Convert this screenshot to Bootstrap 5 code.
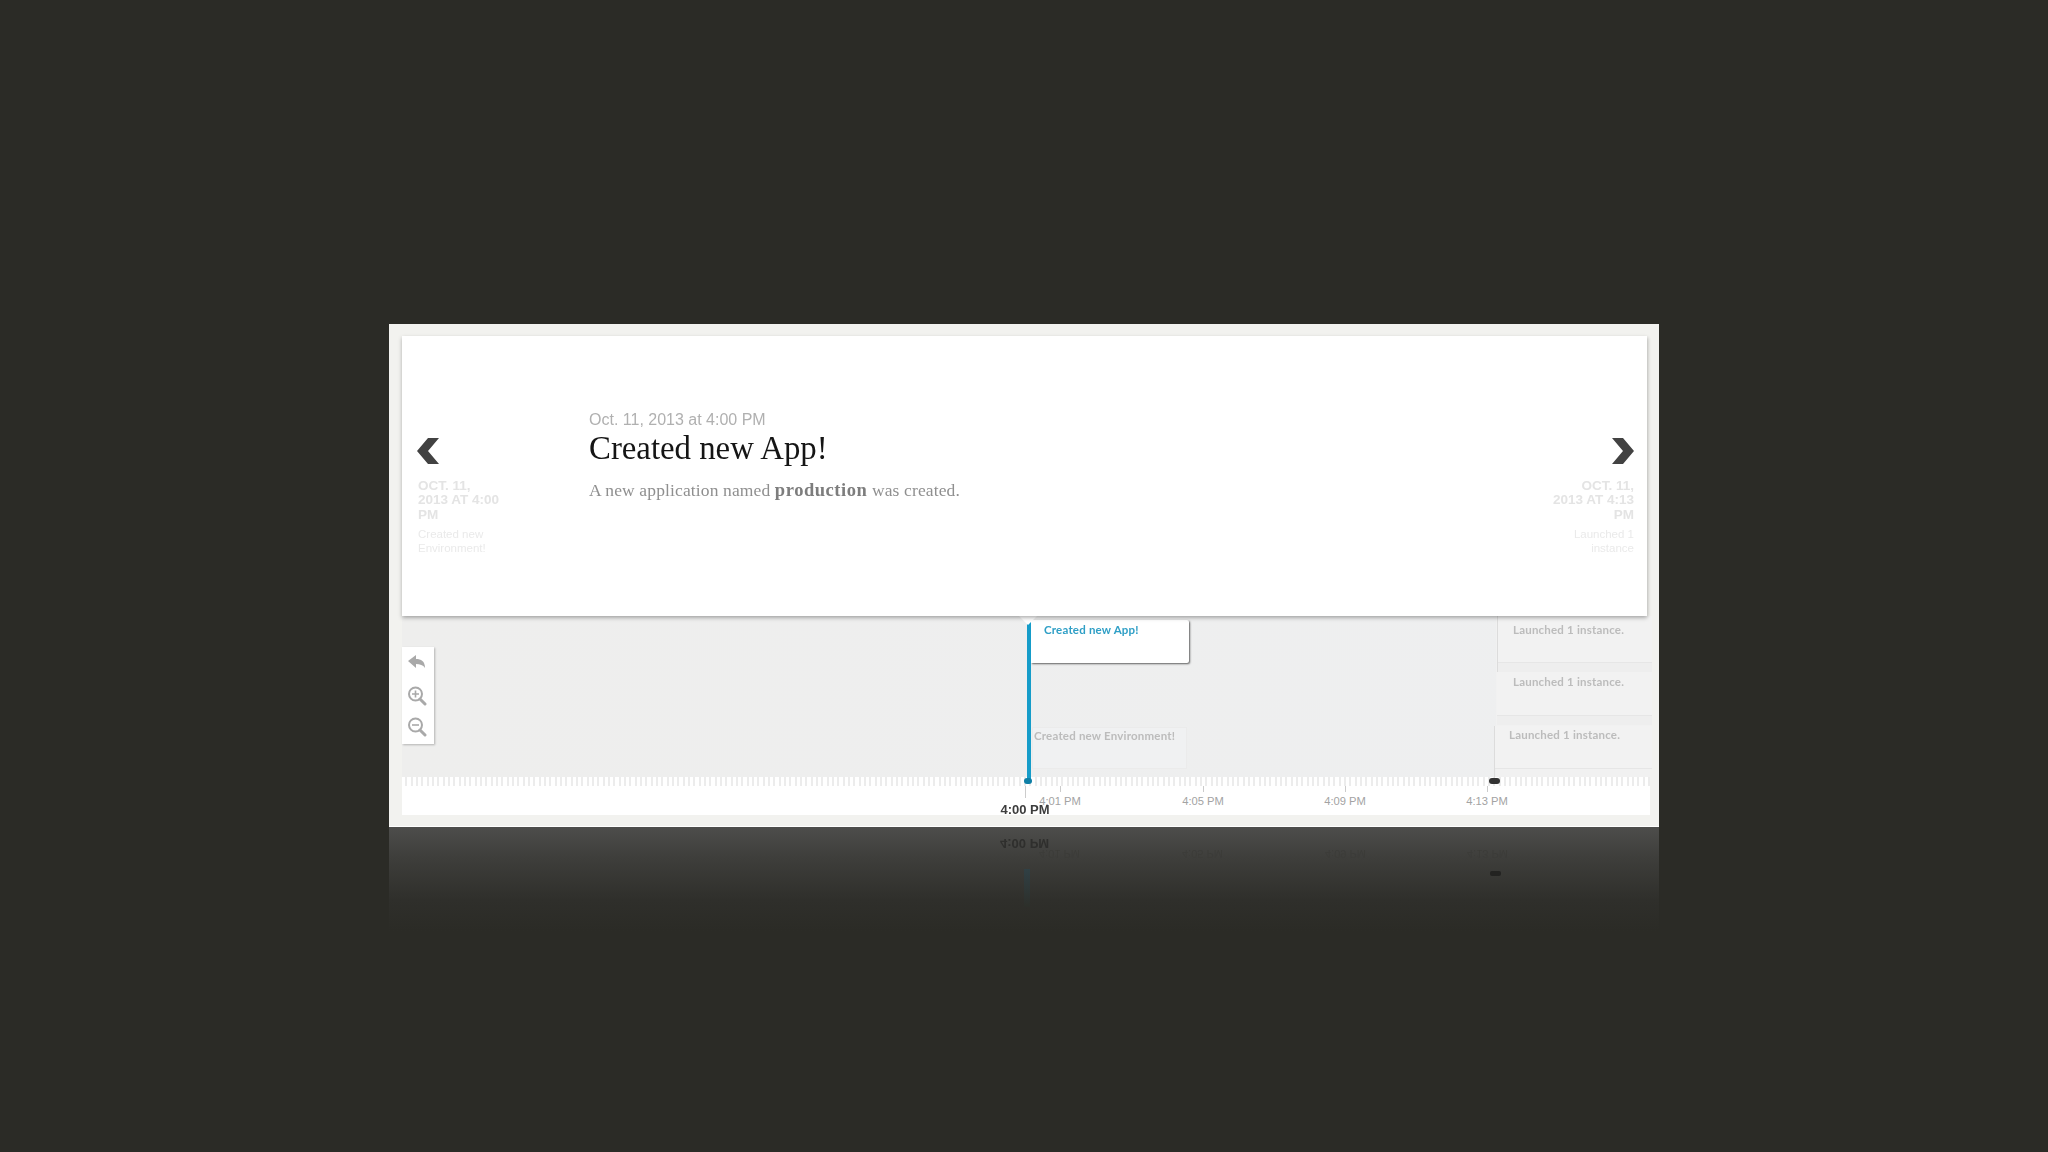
<!DOCTYPE html>
<html lang="en">
<head>
<meta charset="utf-8">
<title>Timeline</title>
<link href="https://cdn.jsdelivr.net/npm/bootstrap@5.3.0/dist/css/bootstrap.min.css" rel="stylesheet">
<style>
html,body{height:100%}
body{background:#2b2b26;font-family:"Liberation Sans",Arial,sans-serif;overflow:hidden;padding-top:324px}
.shot{width:1270px;height:503px;background:#f2f2ef;padding:12px 9px 0 13px;border-bottom:1px solid #fff}
.shot>*{filter:blur(.35px)}
.hero{height:280px;width:1245px;background:#fff;position:relative;z-index:2;box-shadow:0 2px 4px rgba(0,0,0,.28),2px 1px 3px rgba(0,0,0,.06)}
.side{width:150px;padding:102px 13px 0 15px}
.side-r{text-align:right}
.chev{display:block;width:22px;height:26px;margin-bottom:15px;fill:#424242}
.side-r .chev{margin-left:auto}
.peek-h{font-size:13.5px;line-height:14.4px;color:#e4e4e4;filter:blur(.5px);margin-bottom:5px;font-weight:700;padding-left:1px}
.peek-t{font-size:11.5px;line-height:14px;color:#eaeaea;filter:blur(.5px);padding-left:1px}
.body-t{padding:74px 0 0 37px;min-width:0}
.stamp{font-size:16px;line-height:20px;color:#b0b0b0}
.ttl{font-family:"Liberation Serif",serif;font-size:32.800px;line-height:36px;color:#151515;font-weight:400;margin:0 0 13px}
.desc{font-family:"Liberation Serif",serif;font-size:17.500px;line-height:22px;color:#8f8f8f;margin:0;letter-spacing:.13px}
.desc b{color:#7d7d7d;font-size:18.500px;letter-spacing:.55px}
.canvas{position:relative;z-index:1;height:161px;width:1248px;background:linear-gradient(90deg,#eeeeed,#eeeff0)}
.zoombox{position:absolute;left:0;top:31px;width:32px;height:97px;background:#fff;box-shadow:1px 1px 2px rgba(0,0,0,.25);padding-top:5px;gap:8px}
.zoombox svg{display:block;width:20px;height:24px;margin-left:5px;color:#a9a9a9}
.lane{position:absolute;right:0;top:0;bottom:0;width:154px;background:#f1f1f1}
.evt{position:absolute;font-size:11.500px;letter-spacing:.2px;line-height:14px;font-weight:700;font-family:Lato,"Liberation Sans",sans-serif}
.evt-on{left:629px;top:4px;width:158px;height:43px;background:#fff;color:#2f9fc6;padding:3px 13px;border-radius:0 2px 2px 0;box-shadow:1px 1px 2px rgba(0,0,0,.6)}
.evt-off{color:#bcbcbc;background:#f0f1f2;border:1px solid #ebebeb;padding:1px 1px}
.evt-env{left:630px;top:111px;width:155px;height:42px}
.lch{width:auto;right:-2px;border-width:0 0 1px 0;border-color:#e6e6e6;background:#f2f2f2;padding:2px 16px}
.lch1{left:1095px;top:0;height:47px;padding-top:7px}
.lch2{left:1095px;top:56px;height:44px;padding-top:3px}
.lch3{left:1092px;top:110px;height:43px;padding-left:15px}
.band{position:absolute;left:1095px;right:-2px;height:9px;background:#eeeeee}
.band-a{top:47px}
.band-b{top:100px}
.vline{position:absolute;width:1px;background:#dcdcdc}
.vline-a{left:1095px;top:0;height:56px}
.vline-b{left:1092px;top:110px;height:52px}
.bluebar{position:absolute;left:624.5px;top:6px;width:4px;height:158px;background:#159cc9}
.pin{position:absolute;left:617px;top:0;border-style:solid;border-width:9px 9px 0;border-color:#fff transparent transparent;z-index:1}
.dot{position:absolute;top:162px;height:6px;border-radius:3px;z-index:1}
.dot-a{left:622px;width:8px;background:#0f7fa6}
.dot-b{left:1087px;width:11px;background:#333}
.ruler{height:9px;width:1248px;background:repeating-linear-gradient(90deg,#fff 0 3.5px,#ececec 3.5px 5.333px);}
.axis{position:relative;height:29px;width:1248px;background:#fff}
.tick{position:absolute;top:0;width:1px;height:6px;background:#ccc}
.tick-now{left:623px;height:12px}
.tlab{position:absolute;top:8px;transform:translateX(-50%);font-size:11.200px;line-height:14px;color:#a3a3a3;white-space:nowrap}
.tnow{position:absolute;top:16px;left:623px;transform:translateX(-50%);font-size:13px;line-height:16px;font-weight:700;color:#3d3d3d;white-space:nowrap;z-index:2}
.p1{left:658px}.p2{left:801px}.p3{left:943px}.p4{left:1085px}
.mirror{position:relative;width:1270px;height:104px;background:linear-gradient(180deg,#4d4d4b 0,#3e3e3b 30%,#2f2f2b 70%,#2b2b26 100%)}
.mtxt{position:absolute;transform:scaleY(-1);white-space:nowrap;filter:blur(.6px)}
.m-now{left:611px;top:8px;font-size:13px;line-height:16px;font-weight:700;color:#2f2f2d}
.m-lab{top:20px;font-size:11px;line-height:14px;color:#3c3c39}
.q1{left:650px}.q2{left:793px}.q3{left:936px}.q4{left:1078px}
.m-bar{position:absolute;left:635px;top:42px;width:6px;height:38px;background:linear-gradient(180deg,#304045,#2d2f2a)}
.m-dot{position:absolute;left:1101px;top:44px;width:11px;height:5px;border-radius:2px;background:#232321}
</style>
</head>
<body>
<div class="shot mx-auto">
  <div class="hero d-flex justify-content-between">
    <div class="side flex-shrink-0">
      <svg class="chev" viewBox="0 0 22 26"><path d="M22 0 11 13l11 13H11L0 13 11 0z"/></svg>
      <div class="peek-h text-uppercase">Oct. 11,<br>2013 at 4:00<br>PM</div>
      <div class="peek-t">Created new<br>Environment!</div>
    </div>
    <div class="body-t flex-grow-1 text-start">
      <div class="stamp">Oct. 11, 2013 at 4:00 PM</div>
      <h1 class="ttl">Created new App!</h1>
      <p class="desc">A new application named <b>production</b> was created.</p>
    </div>
    <div class="side side-r flex-shrink-0">
      <svg class="chev" viewBox="0 0 22 26"><path d="M0 0h11l11 13-11 13H0l11-13z"/></svg>
      <div class="peek-h text-uppercase">Oct. 11,<br>2013 at 4:13<br>PM</div>
      <div class="peek-t">Launched 1<br>instance</div>
    </div>
  </div>
  <div class="canvas">
    <div class="lane"></div>
    <div class="evt evt-off lch lch1">Launched 1 instance.</div>
    <div class="band band-a"></div>
    <div class="evt evt-off lch lch2">Launched 1 instance.</div>
    <div class="band band-b"></div>
    <div class="evt evt-off lch lch3">Launched 1 instance.</div>
    <div class="vline vline-a"></div>
    <div class="vline vline-b"></div>
    <div class="evt evt-off evt-env">Created new Environment!</div>
    <div class="evt evt-on">Created new App!</div>
    <div class="bluebar"></div>
    <div class="pin"></div>
    <div class="dot dot-a"></div>
    <div class="dot dot-b"></div>
    <div class="zoombox d-flex flex-column">
      <svg viewBox="0 0 20 24"><path fill="currentColor" d="M1 9 9 3v4c5 0 9 2 9 9-2-3-5-4-9-4v4z"/></svg>
      <svg viewBox="0 0 20 24"><g fill="none" stroke="currentColor"><circle cx="8.500" cy="10" r="6.500" stroke-width="2"/><path d="M13 15l5 5" stroke-width="3" stroke-linecap="round"/><path d="M5 10h7M8.500 6.500v7" stroke-width="1.600"/></g></svg>
      <svg viewBox="0 0 20 24"><g fill="none" stroke="currentColor"><circle cx="8.500" cy="9" r="6.500" stroke-width="2"/><path d="M13 14l5 5" stroke-width="3" stroke-linecap="round"/><path d="M5 9h7" stroke-width="1.600"/></g></svg>
    </div>
  </div>
  <div class="ruler"></div>
  <div class="axis">
    <div class="tick tick-now"></div>
    <div class="tick p1"></div>
    <div class="tick p2"></div>
    <div class="tick p3"></div>
    <div class="tick p4"></div>
    <div class="tlab p1">4:01 PM</div>
    <div class="tlab p2">4:05 PM</div>
    <div class="tlab p3">4:09 PM</div>
    <div class="tlab p4">4:13 PM</div>
    <div class="tnow">4:00 PM</div>
  </div>
</div>
<div class="mirror mx-auto">
  <div class="mtxt m-now">4:00 PM</div>
  <div class="mtxt m-lab q1">4:01 PM</div>
  <div class="mtxt m-lab q2">4:05 PM</div>
  <div class="mtxt m-lab q3">4:09 PM</div>
  <div class="mtxt m-lab q4">4:13 PM</div>
  <div class="m-bar"></div>
  <div class="m-dot"></div>
</div>
<script src="https://cdn.jsdelivr.net/npm/bootstrap@5.3.0/dist/js/bootstrap.bundle.min.js"></script>
</body>
</html>
